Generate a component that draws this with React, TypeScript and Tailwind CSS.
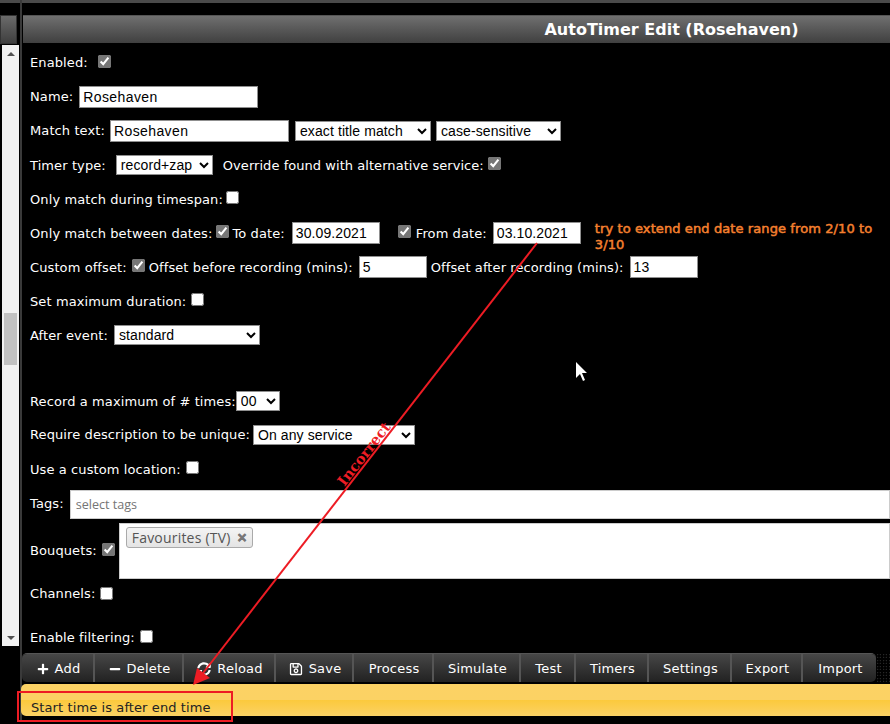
import { FaMinus, FaPlus, FaRegSave, FaSyncAlt } from "react-icons/fa";
import type { ReactNode } from "react";

const input = "bg-white border border-[#8f8f8f] text-black font-['Liberation_Sans',sans-serif] text-[14px] h-[22px] px-[3px] outline-none";
const select = "bg-white border border-[#8f8f8f] text-black font-['Liberation_Sans',sans-serif] text-[14px] h-[20px] outline-none";
const check = "size-[13px] m-0 accent-[#767676] shrink-0";
const low = "mt-[2px]";

function Row({ children, h = "h-[34px]" }: { children: ReactNode; h?: string }) {
  return <div className={`flex items-center whitespace-nowrap ${h}`}>{children}</div>;
}

function Check({ on = false, className = "" }: { on?: boolean; className?: string }) {
  return <input type="checkbox" readOnly checked={on} className={`${check} ${className}`} />;
}

function ScrollColumn() {
  return (
    <div className="w-[20px] shrink-0 flex flex-col">
      <div className="h-[29px] w-[17px] mt-[15px] border border-[#333] bg-gradient-to-b from-[#6b6b6b] to-[#3f3f3f]" />
      <div className="w-[17px] ml-[2px] mt-[1px] h-[601px] bg-[#f1f1f1] flex flex-col items-center">
        <div className="h-[17px] flex items-center justify-center">
          <div className="w-0 h-0 border-x-[4px] border-x-transparent border-b-[4px] border-b-[#505050]" />
        </div>
        <div className="w-[13px] h-[52px] mt-[251px] bg-[#c1c1c1]" />
        <div className="grow" />
        <div className="h-[17px] flex items-center justify-center">
          <div className="w-0 h-0 border-x-[4px] border-x-transparent border-t-[4px] border-t-[#505050]" />
        </div>
      </div>
    </div>
  );
}

function Form() {
  return (
    <div className="pl-[7px] pt-[3px] text-[13px] text-white tracking-[0.1px]">
      <Row>
        <span>Enabled:</span>
        <Check on className="ml-[10px] -mt-[3px]" />
      </Row>
      <Row>
        <span>Name:</span>
        <input readOnly value="Rosehaven" className={`${input} w-[179px] ml-[6px] tracking-[0.4px]`} />
      </Row>
      <Row>
        <span>Match text:</span>
        <input readOnly value="Rosehaven" className={`${input} w-[179px] ml-[5px] tracking-[0.4px]`} />
        <select className={`${select} w-[136px] ml-[6px] tracking-[0.1px]`} defaultValue="a">
          <option value="a">exact title match</option>
        </select>
        <select className={`${select} w-[125px] ml-[5px]`} defaultValue="a">
          <option value="a">case-sensitive</option>
        </select>
      </Row>
      <Row>
        <span className={low}>Timer type:</span>
        <select className={`${select} w-[97px] ml-[10px]`} defaultValue="a">
          <option value="a">record+zap</option>
        </select>
        <span className={`ml-[10px] tracking-[0.05px] ${low}`}>Override found with alternative service:</span>
        <Check on className="ml-[4px] -mt-[3px]" />
      </Row>
      <Row>
        <span className={low}>Only match during timespan:</span>
        <Check className="ml-[3px] -mt-[3px]" />
      </Row>
      <Row>
        <span className={low}>Only match between dates:</span>
        <Check on className="ml-[4px] -mt-[3px]" />
        <span className={`ml-[3px] ${low}`}>To date:</span>
        <input readOnly value="30.09.2021" className={`${input} w-[88px] ml-[7px]`} />
        <Check on className="ml-[18px] -mt-[3px]" />
        <span className={`ml-[5px] ${low}`}>From date:</span>
        <input readOnly value="03.10.2021" className={`${input} w-[88px] ml-[6px]`} />
        <span className="ml-[14px] mt-[8px] w-[285px] whitespace-normal font-normal text-[#f5802f] leading-[16px] [-webkit-text-stroke:0.5px_#f5802f]">
          try to extend end date range from 2/10 to 3/10
        </span>
      </Row>
      <Row>
        <span className={low}>Custom offset:</span>
        <Check on className="ml-[5px] -mt-[3px]" />
        <span className={`ml-[4px] ${low}`}>Offset before recording (mins):</span>
        <input readOnly value="5" className={`${input} w-[68px] ml-[6px]`} />
        <span className={`ml-[4px] ${low}`}>Offset after recording (mins):</span>
        <input readOnly value="13" className={`${input} w-[68px] ml-[6px]`} />
      </Row>
      <Row>
        <span className={low}>Set maximum duration:</span>
        <Check className="ml-[5px] -mt-[3px]" />
      </Row>
      <Row>
        <span className={low}>After event:</span>
        <select className={`${select} w-[146px] ml-[6px]`} defaultValue="a">
          <option value="a">standard</option>
        </select>
      </Row>
      <div className="h-[32px]" />
      <Row>
        <span className={low}>Record a maximum of # times:</span>
        <select className={`${select} w-[44px]`} defaultValue="a">
          <option value="a">00</option>
        </select>
      </Row>
      <Row>
        <span>Require description to be unique:</span>
        <select className={`${select} w-[162px] ml-[3px]`} defaultValue="a">
          <option value="a">On any service</option>
        </select>
      </Row>
      <Row>
        <span className={low}>Use a custom location:</span>
        <Check className="ml-[5px] -mt-[3px]" />
      </Row>
      <Row h="h-[36px]">
        <span>Tags:</span>
        <div className="ml-[6px] grow h-[29px] bg-white border border-[#ccc] flex items-center pl-[5px] pt-[2px] text-[#757575] font-['Open_Sans',sans-serif] text-[12.6px] tracking-normal">
          select tags
        </div>
      </Row>
      <Row h="h-[58px]">
        <span>Bouquets:</span>
        <Check on className="ml-[5px] -mt-[3px]" />
        <div className="ml-[4px] grow h-[56px] bg-white border border-[#ccc] pl-[6px] pt-[3px] font-['Open_Sans',sans-serif] text-[#555] text-[14px] tracking-[0.2px]">
          <div className="inline-flex items-center h-[21px] px-[5px] rounded-[3px] border border-[#aaa] bg-gradient-to-b from-[#f4f4f4] to-[#e4e4e4]">
            Favourites (TV)
            <span className="ml-[6px] text-[#777] font-bold text-[12px] [-webkit-text-stroke:0.6px_#777]">✕</span>
          </div>
        </div>
      </Row>
      <Row h="h-[29px]">
        <span className="-mt-[2px]">Channels:</span>
        <Check className="ml-[5px] -mt-[3px]" />
      </Row>
      <div className="h-[15px]" />
      <Row h="h-[28px]">
        <span>Enable filtering:</span>
        <Check className="ml-[5px] -mt-[3px]" />
      </Row>
    </div>
  );
}

const tools: { label: string; icon?: ReactNode; w: string }[] = [
  { label: "Add", icon: <FaPlus className="size-[12px]" />, w: "w-[73px]" },
  { label: "Delete", icon: <FaMinus className="size-[12px]" />, w: "w-[89px]" },
  { label: "Reload", icon: <FaSyncAlt className="size-[14px]" />, w: "w-[92px]" },
  { label: "Save", icon: <FaRegSave className="size-[14px]" />, w: "w-[78px]" },
  { label: "Process", w: "w-[80px]" },
  { label: "Simulate", w: "w-[87px]" },
  { label: "Test", w: "w-[55px]" },
  { label: "Timers", w: "w-[73px]" },
  { label: "Settings", w: "w-[83px]" },
  { label: "Export", w: "w-[71px]" },
  { label: "Import", w: "w-[73px]" },
];

function Toolbar() {
  return (
    <div className="absolute left-[22px] right-0 top-[653px] h-[30px] flex">
      <div className="flex h-[29px] rounded-[5px] overflow-hidden border-t border-[#555]">
        {tools.map((t) => (
          <div
            key={t.label}
            className={`${t.w} flex items-center justify-center gap-[6px] pt-[1px] pl-[2px] text-[13px] tracking-[0.2px] text-white bg-gradient-to-b from-[#474747] to-[#222] border-r-2 border-[#555] last:border-r-0`}
          >
            {t.icon}
            <span>{t.label}</span>
          </div>
        ))}
      </div>
      <div className="grow bg-[radial-gradient(circle,#000_1.5px,#333_2px,#000_2.5px)] bg-[length:6px_6px]" />
    </div>
  );
}

function Annotation() {
  return (
    <>
      <svg className="absolute inset-0 size-full pointer-events-none" viewBox="0 0 890 724">
        <line x1="537" y1="243" x2="200" y2="677" stroke="#ed1c24" strokeWidth="2" />
        <polygon points="193,685 197,668 210,678" fill="#ed1c24" />
        <rect x="18" y="692" width="214" height="29" fill="none" stroke="#ed1c24" strokeWidth="2" />
        <polygon points="576,362 576,378 580,374 583,381 585,380 582,373 587,373" fill="#fff" />
      </svg>
      <span className="absolute left-[326px] top-[443px] font-['DejaVu_Serif',serif] font-bold text-[14.5px] text-[#ed1c24] -rotate-[52deg]">
        Incorrect
      </span>
    </>
  );
}

export default function App() {
  return (
    <div className="relative w-[890px] h-[724px] overflow-hidden bg-black font-['DejaVu_Sans',sans-serif]">
      <div className="h-[3px] bg-[#4a4a4a]" />
      <div className="flex h-[650px] -mt-[3px]">
        <ScrollColumn />
        <div className="w-[2px] bg-[#3a3a3a] shrink-0 h-[721px]" />
        <div className="grow min-w-0 pl-[1px]">
          <div className="mt-[15px] h-[28px] bg-gradient-to-b from-[#707070] to-[#404040] border-t border-[#555] flex items-center justify-center pl-[430px] text-[16px] font-bold text-white">
            AutoTimer Edit (Rosehaven)
          </div>
          <Form />
        </div>
      </div>
      <Toolbar />
      <div className="absolute left-[21px] right-0 top-[684px] h-[32px] rounded-l-[5px] bg-[linear-gradient(#fcd264_0%,#fbd264_50%,#fbc93c_50%,#fbd264_100%)] flex items-end pl-[10px] text-[13px] tracking-[0.1px] text-[#222]">
        <span className="leading-[16px]">Start time is after end time</span>
      </div>
      <Annotation />
    </div>
  );
}
